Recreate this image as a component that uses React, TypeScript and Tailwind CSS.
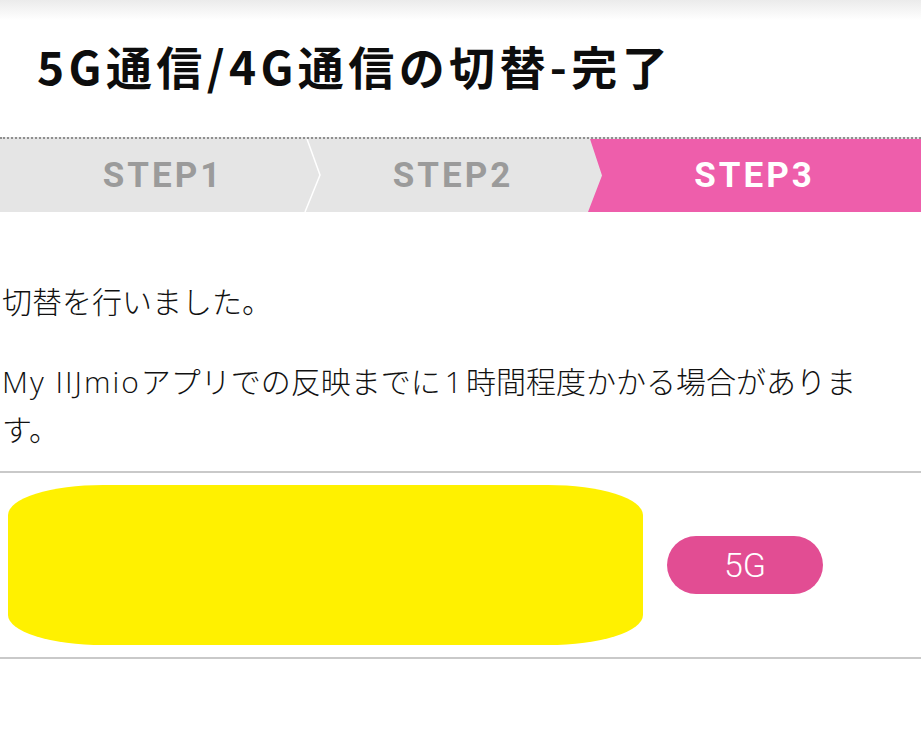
import React from "react";

const jp = '"Noto Sans CJK JP", "Noto Sans", sans-serif';
const body = '"Open Sans", "Noto Sans CJK JP", sans-serif';

function StepBar() {
  return (
    <div className="relative flex h-[75px] w-full border-t-2 border-dotted border-[#8f8f8f] bg-[#e5e5e5]">
      <div className="flex w-[310px] items-center justify-center pl-4">
        <StepLabel text="STEP1" active={false} />
      </div>
      <div className="flex flex-1 items-center justify-center pl-2">
        <StepLabel text="STEP2" active={false} />
      </div>
      <div className="flex w-[333px] items-center justify-center bg-[#ee5eab] [clip-path:polygon(2px_0,100%_0,100%_100%,0_100%,14px_50%)]">
        <StepLabel text="STEP3" active />
      </div>
      {/* thin white chevron between the first two steps */}
      <svg
        className="absolute left-[300px] top-0 h-[73px] w-[26px]"
        viewBox="0 0 26 73"
        fill="none"
      >
        <polyline points="7,0 20,36 5,73" stroke="#ffffff" strokeWidth="1.5" />
      </svg>
    </div>
  );
}

function StepLabel({ text, active }: { text: string; active: boolean }) {
  return (
    <span
      className={
        "text-[35px] font-bold leading-none tracking-[3px] " +
        (active ? "text-white" : "text-[#9b9b9b]")
      }
      style={{ fontFamily: "Roboto, 'Liberation Sans', sans-serif" }}
    >
      {text}
    </span>
  );
}

export default function App() {
  return (
    <div className="min-h-[731px] w-full bg-white" style={{ fontFamily: jp }}>
      <div className="h-[20px] w-full bg-gradient-to-b from-[#ebebeb] to-white" />
      <div className="pb-[48px] pl-[37px] pt-[21px]">
        <h1 className="text-[46px] font-bold leading-[48px] tracking-[4.4px] text-[#0d0d0d]">
          5G通信/4G通信の切替-完了
        </h1>
      </div>

      <StepBar />

      <div
        className="mt-[66px] px-[2px] text-[30px] font-light leading-[48px] text-[#111111]"
        style={{ fontFamily: body }}
      >
        <p>切替を行いました。</p>
        <p className="mt-[32px]">
          <span className="tracking-[2px]">My IIJmio</span>アプリでの反映までに
          <span className="px-[4px]">1</span>時間程度かかる場合がありま
          <br />
          す。
        </p>
      </div>

      <div className="mt-[17px] flex h-[188px] items-center gap-[24px] border-y-2 border-[#c9c9c9] pl-[8px]">
        <div className="h-[160px] w-[635px] rounded-[95px/30px] bg-[#fff100]" />
        <div className="flex h-[58px] w-[156px] items-center justify-center rounded-full bg-[#e24d93]">
          <span
            className="text-[34px] font-light leading-none text-white"
            style={{ fontFamily: "Roboto, 'Liberation Sans', sans-serif" }}
          >
            5G
          </span>
        </div>
      </div>
    </div>
  );
}
